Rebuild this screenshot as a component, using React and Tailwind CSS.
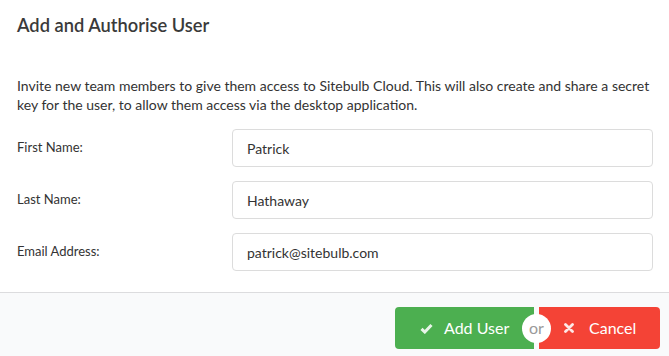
export default function App() {
  const rows = [
    ["First Name:", "Patrick"],
    ["Last Name:", "Hathaway"],
    ["Email Address:", "patrick@sitebulb.com"],
  ];
  return (
    <div className="w-[669px] h-[356px] bg-white flex flex-col overflow-hidden text-[#333]" style={{ fontFamily: "Lato, 'Open Sans', sans-serif" }}>
      <div className="h-[50px] flex items-center px-[17px] shrink-0">
        <h1 className="text-[18.3px] font-semibold text-[#3a3a3a] leading-none">Add and Authorise User</h1>
      </div>
      <div className="px-[17px] pt-[26px] flex flex-col">
        <p className="text-[14px] leading-[19px] text-[#333]">
          Invite new team members to give them access to Sitebulb Cloud. This will also create and share a secret key for the user, to allow them access via the desktop application.
        </p>
        <div className="flex flex-col gap-[14px] mt-[15px] -mr-[1px]">
          {rows.map(([label, value]) => (
            <div key={label} className="flex items-center h-[38px]">
              <div className="w-[215px] text-[13px] text-[#333]">{label}</div>
              <div className="flex-1 h-[38px] border border-[#dcdcdc] rounded-[4px] flex items-center px-[14px] text-[14px] text-[#333]">
                {value}
              </div>
            </div>
          ))}
        </div>
      </div>
      <div className="mt-auto h-[64px] bg-[#f9fafb] border-t border-[#dcdcde] flex justify-end items-start pt-[14px] pr-[9px]">
        <div className="flex relative">
          <button className="w-[139px] h-[42px] bg-[#4caf50] rounded-l-[4px] text-white text-[16px] font-normal flex items-center pl-[25px] gap-[11px]">
            <svg width="13" height="11" viewBox="0 0 13 11"><path d="M1.5 5.8 L4.8 9 L11.5 2" fill="none" stroke="#e8f5e9" strokeWidth="3" /></svg>
            <span>Add User</span>
          </button>
          <div className="w-[5px]" />
          <button className="w-[121px] h-[42px] bg-[#f44336] rounded-r-[4px] text-white text-[16px] font-normal flex items-center pl-[25px] gap-[15px]">
            <svg width="10" height="10" viewBox="0 0 10 10"><path d="M1.5 1.5 L8.5 8.5 M8.5 1.5 L1.5 8.5" fill="none" stroke="#fde8e6" strokeWidth="2.8" strokeLinecap="round" /></svg>
            <span>Cancel</span>
          </button>
          <div className="absolute left-[127px] top-[7px] w-[29px] h-[29px] rounded-full bg-white flex items-center justify-center text-[16px] text-[#9a9a9a] font-normal pb-[1px]">
            or
          </div>
        </div>
      </div>
    </div>
  );
}
